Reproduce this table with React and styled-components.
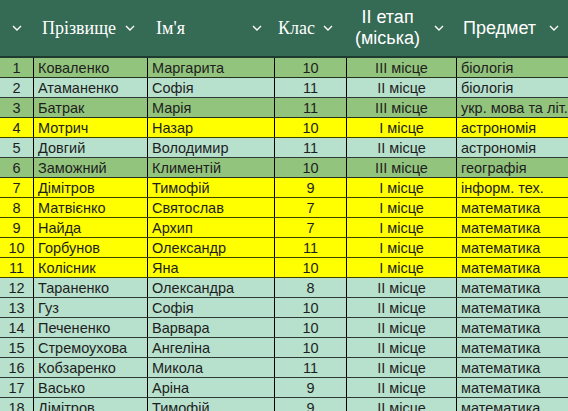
import React from "react";
import styled, { createGlobalStyle } from "styled-components";

const GlobalStyle = createGlobalStyle`
  html, body {
    margin: 0;
    padding: 0;
    background: #ffffff;
    overflow: hidden;
  }
`;

const COLUMNS = "33px 114px 127px 72px 110px 112px";

const Sheet = styled.div`
  width: 568px;
  height: 411px;
  overflow: hidden;
  font-family: "Liberation Sans", Arial, sans-serif;
`;

const HeaderRow = styled.div`
  display: grid;
  grid-template-columns: ${COLUMNS};
  height: 56px;
  background: #356a54;
  border-bottom: 2px solid #1f3b2f;
  color: #ffffff;
`;

const HeaderCell = styled.div`
  display: flex;
  align-items: center;
  justify-content: ${(p) => (p.$center ? "center" : "space-between")};
  padding: ${(p) => (p.$center ? "0" : p.$pad || "0 12px 0 9px")};
  font-family: ${(p) =>
    p.$serif
      ? '"Liberation Serif", "Times New Roman", serif'
      : '"Liberation Sans", Arial, sans-serif'};
  font-size: 18px;
  line-height: 21px;
  text-align: center;
  white-space: nowrap;
`;

const Row = styled.div`
  display: grid;
  grid-template-columns: ${COLUMNS};
  height: 20px;
  background: ${(p) => p.$bg};
  border-bottom: 1px solid rgba(0, 0, 0, 0.75);
  box-sizing: border-box;
`;

const Cell = styled.div`
  display: flex;
  align-items: center;
  justify-content: ${(p) => (p.$center ? "center" : "flex-start")};
  padding: 0 4px;
  font-size: 14.5px;
  color: #1e1e1e;
  white-space: nowrap;
  overflow: hidden;
  border-left: ${(p) => (p.$first ? "none" : "1px solid #000")};
  box-sizing: border-box;
`;

const Chevron = () => (
  <svg width="10" height="6" viewBox="0 0 10 6" fill="none">
    <path d="M1 1 L5 5 L9 1" stroke="#ffffff" strokeWidth="1.4" />
  </svg>
);

const COLORS = {
  g: "#93c47d",
  m: "#b7e1cd",
  y: "#ffff00",
};

const rows = [
  ["g", "Коваленко", "Маргарита", 10, "III місце", "біологія"],
  ["m", "Атаманенко", "Софія", 11, "II місце", "біологія"],
  ["g", "Батрак", "Марія", 11, "III місце", "укр. мова та літ."],
  ["y", "Мотрич", "Назар", 10, "I місце", "астрономія"],
  ["m", "Довгий", "Володимир", 11, "II місце", "астрономія"],
  ["g", "Заможний", "Климентій", 10, "III місце", "географія"],
  ["y", "Дімітров", "Тимофій", 9, "I місце", "інформ. тех."],
  ["y", "Матвієнко", "Святослав", 7, "I місце", "математика"],
  ["y", "Найда", "Архип", 7, "I місце", "математика"],
  ["y", "Горбунов", "Олександр", 11, "I місце", "математика"],
  ["y", "Колісник", "Яна", 10, "I місце", "математика"],
  ["m", "Тараненко", "Олександра", 8, "II місце", "математика"],
  ["m", "Гуз", "Софія", 10, "II місце", "математика"],
  ["m", "Печененко", "Варвара", 10, "II місце", "математика"],
  ["m", "Стремоухова", "Ангеліна", 10, "II місце", "математика"],
  ["m", "Кобзаренко", "Микола", 11, "II місце", "математика"],
  ["m", "Васько", "Аріна", 9, "II місце", "математика"],
  ["m", "Дімітров", "Тимофій", 9, "II місце", "математика"],
];

export default function App() {
  return (
    <>
      <GlobalStyle />
      <Sheet>
        <HeaderRow>
          <HeaderCell $center>
            <Chevron />
          </HeaderCell>
          <HeaderCell $serif>
            <span>Прізвище</span>
            <Chevron />
          </HeaderCell>
          <HeaderCell $serif>
            <span>Ім'я</span>
            <Chevron />
          </HeaderCell>
          <HeaderCell $serif $pad="0 13px 0 4px">
            <span>Клас</span>
            <Chevron />
          </HeaderCell>
          <HeaderCell $pad="0 12px 0 9px">
            <span>
              II етап
              <br />
              (міська)
            </span>
            <Chevron />
          </HeaderCell>
          <HeaderCell $pad="0 9px 0 7px">
            <span>Предмет</span>
            <Chevron />
          </HeaderCell>
        </HeaderRow>
        {rows.map((r, i) => (
          <Row key={i} $bg={COLORS[r[0]]}>
            <Cell $first $center>
              {i + 1}
            </Cell>
            <Cell>{r[1]}</Cell>
            <Cell>{r[2]}</Cell>
            <Cell $center>{r[3]}</Cell>
            <Cell $center>{r[4]}</Cell>
            <Cell>{r[5]}</Cell>
          </Row>
        ))}
      </Sheet>
    </>
  );
}
